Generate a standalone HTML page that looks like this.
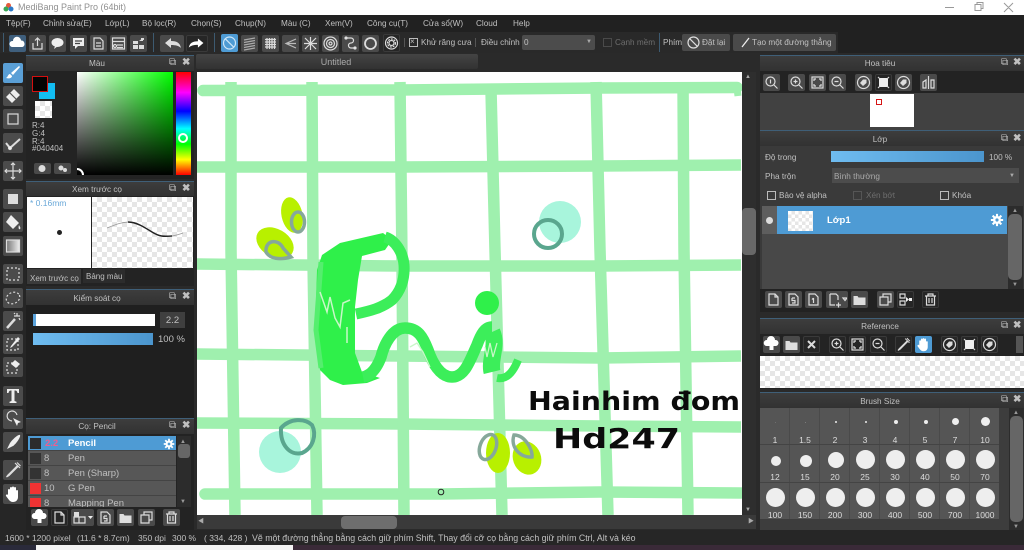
<!DOCTYPE html>
<html lang="vi"><head><meta charset="utf-8"><title>MediBang Paint Pro (64bit)</title>
<style>
html,body{margin:0;padding:0;width:1024px;height:550px;overflow:hidden;background:#2a2a2a}
body{position:relative;font-family:"Liberation Sans","Noto Sans CJK SC",sans-serif;font-size:8.2px;color:#c0c0c0}
div,span.t,svg.b{position:absolute}
.t{position:absolute;white-space:nowrap;line-height:11px;height:11px}
.c{text-align:center}
svg.b{width:17px;height:17px;background:#4a4a4a;border-radius:2px;fill:none;stroke:#dcdcdc;stroke-width:1.2}
svg.d{background:#262626;box-shadow:inset 0 0 0 1px #3a3a3a}
svg.l{width:20px;height:20px;background:#4b4b4b}
.h{background:linear-gradient(#3d3d3d,#323232);border-top:1px solid #3f5f78;box-sizing:border-box}
.ck{background:repeating-conic-gradient(#e6e6e6 0 25%,#fff 0 50%) 0 0/10px 10px}
.box{box-sizing:border-box;width:9px;height:9px;border:1px solid #bbb}
.r{height:15px;left:28px;width:148px;background:#575757;border-bottom:1px solid #444;box-sizing:border-box}
.dot{position:absolute;background:#eee;border-radius:50%}
.sz{position:absolute;width:30px;text-align:center;color:#ddd;line-height:9px;font-size:8.5px}
</style></head><body>
<svg width="0" height="0" style="position:absolute"><defs>
<symbol id="cloud" viewBox="0 0 17 17"><path d="M3 12a3 3 0 0 1 1-6 4 4 0 0 1 8-.5 3.4 3.4 0 0 1 1.500 6.500z" fill="#fff" stroke="none"/></symbol>
<symbol id="up" viewBox="0 0 17 17"><path d="M4 8v6h9V8M8.500 11V3M6 5.500 8.500 3 11 5.500"/></symbol>
<symbol id="chat" viewBox="0 0 17 17"><ellipse cx="8.500" cy="7.500" rx="6" ry="4.500" fill="#eee" stroke="none"/><path d="M6 11l-1 3 4-3" fill="#eee" stroke="none"/></symbol>
<symbol id="note" viewBox="0 0 17 17"><path d="M3 3h11v8H8l-3 3v-3H3z" fill="#eee" stroke="none"/><path d="M5 6h7M5 8.500h5" stroke="#444"/></symbol>
<symbol id="doc" viewBox="0 0 17 17"><path d="M4 3h6l3 3v8H4zM6 8h5M6 11h5"/></symbol>
<symbol id="page" viewBox="0 0 17 17"><path d="M4 3h6l3 3v8H4zM10 3v3h3"/></symbol>
<symbol id="list" viewBox="0 0 17 17"><path d="M2.500 3h12v11h-12zM2.500 6.500h12M7 10h6M7 12.500h6"/><circle cx="5" cy="11" r="1.500"/></symbol>
<symbol id="grid" viewBox="0 0 17 17"><path d="M3 6h5v3H3zM3 10h5v4H3zM9 10h5v4H9zM9 6h4V3" fill="#ddd" stroke="none"/><path d="M11 3h3v2h-3z" fill="#ddd" stroke="none"/></symbol>
<symbol id="undo" viewBox="0 0 24 17"><path d="M5 8 11 3v3c6 0 9 2 10 7-2-2-5-3-10-3v3z" fill="#ddd" stroke="none"/></symbol>
<symbol id="redo" viewBox="0 0 24 17"><path d="M19 8 13 3v3C7 6 4 8 3 13c2-2 5-3 10-3v3z" fill="#fff" stroke="none"/></symbol>
<symbol id="no" viewBox="0 0 17 17"><circle cx="8.500" cy="8.500" r="6" stroke="#cfe6f7"/><path d="M4.300 4.300l8.400 8.400" stroke="#cfe6f7"/></symbol>
<symbol id="hl" viewBox="0 0 17 17"><path d="M3 5l11-2M3 7.500l11-2M3 10l11-2M3 12.500l11-2M3 15l11-2" stroke="#aaa"/></symbol>
<symbol id="gr" viewBox="0 0 17 17"><path d="M3 4.500h11M3 7h11M3 9.500h11M3 12h11M5 3v11M7.500 3v11M10 3v11M12.500 3v11"/></symbol>
<symbol id="fan" viewBox="0 0 17 17"><path d="M14 4 4 8.500l10 4.500M14 8.500H4" stroke="#bbb"/></symbol>
<symbol id="star" viewBox="0 0 17 17"><path d="M3 3l11 11M14 3 3 14M8.500 2v13M2 8.500h13"/></symbol>
<symbol id="con" viewBox="0 0 17 17"><circle cx="8.500" cy="8.500" r="6.500"/><circle cx="8.500" cy="8.500" r="4"/><circle cx="8.500" cy="8.500" r="1.500"/></symbol>
<symbol id="cur" viewBox="0 0 17 17"><path d="M4 3h5a2 2 0 0 1 0 5 2.500 2.500 0 0 0 0 5h4"/><circle cx="4" cy="3" r="1" fill="#fff"/><circle cx="13" cy="13" r="1" fill="#fff"/></symbol>
<symbol id="ring" viewBox="0 0 17 17"><circle cx="8.500" cy="8.500" r="5.500" stroke-width="1.800"/></symbol>
<symbol id="gear" viewBox="0 0 17 17"><circle cx="8.500" cy="8.500" r="6"/><circle cx="8.500" cy="8.500" r="2.500"/><circle cx="8.500" cy="8.500" r="4" stroke-dasharray="2 1"/></symbol>
<symbol id="brush" viewBox="0 0 20 20"><path d="M16 3 8 10l2 2 7-8zM7 11c-2 0-2 3-4 4 3 1 6 0 6-2z" fill="#fff" stroke="none"/></symbol>
<symbol id="erase" viewBox="0 0 20 20"><path d="M11 3l6 6-8 8-6-6z" fill="#eee" stroke="none"/><path d="M7 7l6 6" stroke="#555"/></symbol>
<symbol id="sq" viewBox="0 0 20 20"><rect x="5" y="5" width="10" height="10"/></symbol>
<symbol id="check" viewBox="0 0 20 20"><path d="M3 10l4 5 10-9" stroke-width="2"/><circle cx="7" cy="15" r="1.500" fill="#fff"/></symbol>
<symbol id="move" viewBox="0 0 20 20"><path d="M10 2v16M2 10h16M8 4l2-2 2 2M8 16l2 2 2-2M4 8l-2 2 2 2M16 8l2 2-2 2"/></symbol>
<symbol id="fill" viewBox="0 0 20 20"><rect x="5" y="5" width="10" height="10" fill="#ddd" stroke="none"/></symbol>
<symbol id="bucket" viewBox="0 0 20 20"><path d="M8 3l8 8-6 6-7-7z" fill="#eee" stroke="none"/><path d="M16 13c1 2 2 3 1 4s-2-1-1-4z" fill="#eee" stroke="none"/></symbol>
<symbol id="grad" viewBox="0 0 20 20"><defs><linearGradient id="gg"><stop offset="0" stop-color="#777"/><stop offset="1" stop-color="#eee"/></linearGradient></defs><rect x="3.500" y="4" width="13" height="12" fill="url(#gg)" stroke="#ddd"/></symbol>
<symbol id="sel" viewBox="0 0 20 20"><rect x="4" y="4" width="12" height="12" stroke-dasharray="2 2"/></symbol>
<symbol id="lasso" viewBox="0 0 20 20"><ellipse cx="10" cy="10" rx="7" ry="5.500" stroke-dasharray="2 2" transform="rotate(-25 10 10)"/></symbol>
<symbol id="wand" viewBox="0 0 20 20"><path d="M4 17 12 8" stroke-width="2.500"/><path d="M14 2v3M11 5h6M16 7l1 2M11 2l1 1"/></symbol>
<symbol id="selp" viewBox="0 0 20 20"><rect x="4" y="5" width="11" height="11" stroke-dasharray="2 2"/><path d="M15 3 8 12l-1 2 2-1 8-8z" fill="#eee" stroke="none"/></symbol>
<symbol id="sele" viewBox="0 0 20 20"><rect x="4" y="6" width="10" height="10" stroke-dasharray="2 2"/><path d="M12 3l5 4-4 4-5-4z" fill="#eee" stroke="none"/></symbol>
<symbol id="ltr" viewBox="0 0 20 20"><path d="M4 3h12v4h-1.500c-.5-2-1-2.500-3-2.500V15l2 .8V17H6.500v-1.200l2-.8V4.500c-2 0-2.500.5-3 2.500H4z" fill="#eee" stroke="none"/></symbol>
<symbol id="op" viewBox="0 0 20 20"><path d="M9 12a5 5 0 1 1 5-6"/><path d="M10 9l8 4-3 1-1 3z" fill="#eee" stroke="none"/></symbol>
<symbol id="knife" viewBox="0 0 20 20"><path d="M17 3c1 2-4 9-7 11l-6 3 3-6c2-3 8-9 10-8z" fill="#eee" stroke="none"/></symbol>
<symbol id="drop" viewBox="0 0 20 20"><path d="M14 6 5 15l-1.500 2L6 15.500l9-9zM12 3l5 5M14 2.500l3.500 3.500"/></symbol>
<symbol id="hand" viewBox="0 0 20 20"><path d="M5 11V6a1 1 0 0 1 2 0V4a1 1 0 0 1 2 0v-.5a1 1 0 0 1 2 0V4a1 1 0 0 1 2 0v3a1 1 0 0 1 2 0v6c0 3-2 5-5 5-2 0-3-1-4-2l-3-4a1 1 0 0 1 2-1z" fill="#fff" stroke="none"/></symbol>
<symbol id="zi" viewBox="0 0 17 17"><circle cx="7.500" cy="7.500" r="4.500"/><path d="M11 11l3.500 3.500M5.500 7.500h4M7.500 5.500v4"/></symbol>
<symbol id="zo" viewBox="0 0 17 17"><circle cx="7.500" cy="7.500" r="4.500"/><path d="M11 11l3.500 3.500M5.500 7.500h4"/></symbol>
<symbol id="z1" viewBox="0 0 17 17"><circle cx="7.500" cy="7.500" r="4.500"/><path d="M11 11l3.500 3.500M7.500 5.500v4"/></symbol>
<symbol id="fit" viewBox="0 0 17 17"><rect x="3" y="3" width="11" height="11"/><path d="M5 7V5h2M12 7V5h-2M5 10v2h2M12 10v2h-2"/></symbol>
<symbol id="rl" viewBox="0 0 17 17"><circle cx="8.500" cy="8.500" r="6"/><path d="M5 9l3-3.500h3.500V9L8 12z" fill="#ddd" stroke="none"/></symbol>
<symbol id="sqi" viewBox="0 0 17 17"><rect x="4" y="4" width="9" height="9" fill="#eee" stroke="none"/><path d="M3 3l2 2M14 3l-2 2M3 14l2-2M14 14l-2-2"/></symbol>
<symbol id="flip" viewBox="0 0 17 17"><path d="M8.500 2v13M3 14V8l3-2v8zM14 14V6l-3 0v8z"/></symbol>
<symbol id="upc" viewBox="0 0 17 17"><path d="M3.500 10a3 3 0 0 1 .5-6 4 4 0 0 1 8 0 3 3 0 0 1 1 6H10.500v4h-4v-4z" fill="#fff" stroke="none"/></symbol>
<symbol id="folder" viewBox="0 0 17 17"><path d="M2.500 5h4l1 1.500h7V14h-12z" fill="#ddd" stroke="none"/></symbol>
<symbol id="copy" viewBox="0 0 17 17"><path d="M3 6h8v8H3zM6 6V3h8v8h-3"/></symbol>
<symbol id="trash" viewBox="0 0 17 17"><path d="M3 5h11M6 5V3h5v2M4.500 5v9h8V5M7 7v5M10 7v5"/></symbol>
<symbol id="merge" viewBox="0 0 17 17"><path d="M3 3h5v4H3zM3 10h5v4H3z"/><path d="M9 6l3 2.500L9 11zM12 7h3v3h-3z" fill="#eee" stroke="none"/></symbol>
<symbol id="add" viewBox="0 0 20 17"><path d="M3 3h6l2 2v4M3 3v11h5M9 14h5M11.500 11.500v5M16 7h4l-2 2.500z"/></symbol>
<symbol id="x" viewBox="0 0 17 17"><path d="M5 5l7 7M12 5l-7 7" stroke-width="2"/></symbol>
<symbol id="s5" viewBox="0 0 17 17"><path d="M4 3h6l3 3v8H4zM7 7h3M7 7v2.500h3V12H7"/></symbol>
<symbol id="s1" viewBox="0 0 17 17"><path d="M4 3h6l3 3v8H4zM8.500 7v5M7 8.500 8.500 7"/></symbol>
<symbol id="g1" viewBox="0 0 17 17"><path d="M3 3h5v5H3z" fill="#ddd" stroke="none"/><path d="M8 8h6v6H8zM3 8h5v6H3z"/></symbol>
<symbol id="cog" viewBox="0 0 16 16"><circle cx="8" cy="8" r="4.600" fill="#fff" stroke="none"/><path d="M8 1v14M1 8h14M3 3l10 10M13 3 3 13" stroke="#fff" stroke-width="2.400"/><circle cx="8" cy="8" r="1.800" fill="#4e9bd4" stroke="none"/></symbol>
</defs></svg>

<!-- title bar -->
<div style="left:0;top:0;width:1024px;height:15px;background:#fff"></div>
<svg style="position:absolute;left:3px;top:2px" width="11" height="11"><circle cx="5.500" cy="3.500" r="2.500" fill="#e5593c"/><circle cx="3" cy="7" r="2.500" fill="#3aa655"/><circle cx="8" cy="7" r="2.500" fill="#2d79c7"/></svg>
<span class="t" style="left:18px;top:2px;color:#909090;font-size:9px">MediBang Paint Pro (64bit)</span>
<svg style="position:absolute;left:940px;top:0" width="84" height="15" fill="none" stroke="#999" stroke-width="1"><path d="M5 7.500h9M35 4.500h6v6h-6zM37 4.500V2.500h6v6h-2M64 3l9 9M73 3l-9 9"/></svg>

<!-- menu -->
<div style="left:0;top:15px;width:1024px;height:17px;background:#212121"></div>
<span class="t" style="left:6px;top:18px">Tệp(F)</span>
<span class="t" style="left:43px;top:18px">Chỉnh sửa(E)</span>
<span class="t" style="left:105px;top:18px">Lớp(L)</span>
<span class="t" style="left:142px;top:18px">Bộ lọc(R)</span>
<span class="t" style="left:191px;top:18px">Chọn(S)</span>
<span class="t" style="left:235px;top:18px">Chụp(N)</span>
<span class="t" style="left:281px;top:18px">Màu (C)</span>
<span class="t" style="left:325px;top:18px">Xem(V)</span>
<span class="t" style="left:367px;top:18px">Công cụ(T)</span>
<span class="t" style="left:423px;top:18px">Cửa sổ(W)</span>
<span class="t" style="left:476px;top:18px">Cloud</span>
<span class="t" style="left:513px;top:18px">Help</span>

<!-- toolbar -->
<div style="left:0;top:32px;width:838px;height:21px;background:#292929"></div>
<div style="left:838px;top:32px;width:186px;height:21px;background:#212121"></div>
<div style="left:3px;top:33px;width:1px;height:19px;background:#3d5a70"></div>
<div style="left:153px;top:33px;width:1px;height:19px;background:#3d5a70"></div>
<div style="left:214px;top:33px;width:1px;height:19px;background:#3d5a70"></div>
<div style="left:659px;top:33px;width:1px;height:19px;background:#3d5a70"></div>
<svg class="b" style="left:9px;top:35px;background:#3f5f7d"><use href="#cloud"/></svg>
<svg class="b" style="left:29px;top:35px"><use href="#up"/></svg>
<svg class="b" style="left:49px;top:35px"><use href="#chat"/></svg>
<svg class="b" style="left:70px;top:35px"><use href="#note"/></svg>
<svg class="b" style="left:90px;top:35px"><use href="#doc"/></svg>
<svg class="b" style="left:110px;top:35px"><use href="#list"/></svg>
<svg class="b" style="left:130px;top:35px"><use href="#grid"/></svg>
<svg class="b" style="left:160px;top:35px;width:24px"><use href="#undo"/></svg>
<svg class="b d" style="left:186px;top:35px;width:22px"><use href="#redo"/></svg>
<svg class="b" style="left:221px;top:34px;background:#4e9bd4;height:18px"><use href="#no"/></svg>
<svg class="b" style="left:241px;top:35px"><use href="#hl"/></svg>
<svg class="b" style="left:262px;top:35px"><use href="#gr"/></svg>
<svg class="b" style="left:282px;top:35px"><use href="#fan"/></svg>
<svg class="b" style="left:302px;top:35px"><use href="#star"/></svg>
<svg class="b" style="left:322px;top:35px"><use href="#con"/></svg>
<svg class="b" style="left:342px;top:35px"><use href="#cur"/></svg>
<svg class="b" style="left:362px;top:35px"><use href="#ring"/></svg>
<svg class="b d" style="left:383px;top:34px;height:18px"><use href="#gear"/></svg>
<div style="left:404px;top:38px;width:1px;height:9px;background:#555"></div>
<div class="box" style="left:409px;top:38px;border-color:#bbb"></div><span class="t" style="left:410px;top:37px;font-size:8px;line-height:10px">×</span>
<span class="t" style="left:421px;top:37px">Khử răng cưa</span>
<div style="left:475px;top:38px;width:1px;height:9px;background:#555"></div>
<span class="t" style="left:481px;top:37px">Điều chỉnh</span>
<div style="left:522px;top:35px;width:73px;height:15px;background:#4c4c4c;border-radius:2px"></div>
<span class="t" style="left:524px;top:37px">0</span>
<span class="t" style="left:586px;top:37px;font-size:6px;color:#aaa">▼</span>
<div class="box" style="left:603px;top:38px;border-color:#4a4a4a"></div>
<span class="t" style="left:615px;top:37px;color:#6e6e6e">Cạnh mềm</span>
<span class="t" style="left:663px;top:37px">Phím</span>
<div style="left:682px;top:34px;width:48px;height:17px;background:#4a4a4a;border-radius:2px"></div>
<svg style="position:absolute;left:686px;top:35px" width="15" height="15" fill="none" stroke="#ddd" stroke-width="1.200"><circle cx="7.500" cy="7.500" r="5.500"/><path d="M3.700 3.700l7.600 7.600"/></svg>
<span class="t" style="left:702px;top:37px">Đặt lại</span>
<div style="left:733px;top:34px;width:103px;height:17px;background:#4a4a4a;border-radius:2px"></div>
<svg style="position:absolute;left:740px;top:36px" width="12" height="13" fill="none" stroke="#eee" stroke-width="1.300"><path d="M2 11 9 2"/></svg>
<span class="t" style="left:752px;top:37px">Tạo một đường thẳng</span>

<!-- left tools -->
<div style="left:0;top:53px;width:26px;height:477px;background:#262626"></div>
<svg class="b l" style="left:3px;top:63px;background:#5a9fd6"><use href="#brush"/></svg>
<svg class="b l" style="left:3px;top:86px"><use href="#erase"/></svg>
<svg class="b l" style="left:3px;top:109px"><use href="#sq"/></svg>
<svg class="b l" style="left:3px;top:133px"><use href="#check"/></svg>
<svg class="b l" style="left:3px;top:161px"><use href="#move"/></svg>
<svg class="b l" style="left:3px;top:189px"><use href="#fill"/></svg>
<svg class="b l" style="left:3px;top:212px"><use href="#bucket"/></svg>
<svg class="b l" style="left:3px;top:236px"><use href="#grad"/></svg>
<svg class="b l" style="left:3px;top:264px"><use href="#sel"/></svg>
<svg class="b l" style="left:3px;top:288px"><use href="#lasso"/></svg>
<svg class="b l" style="left:3px;top:311px"><use href="#wand"/></svg>
<svg class="b l" style="left:3px;top:334px"><use href="#selp"/></svg>
<svg class="b l" style="left:3px;top:357px"><use href="#sele"/></svg>
<svg class="b l" style="left:3px;top:386px"><use href="#ltr"/></svg>
<svg class="b l" style="left:3px;top:409px"><use href="#op"/></svg>
<svg class="b l" style="left:3px;top:432px"><use href="#knife"/></svg>
<svg class="b l" style="left:3px;top:460px"><use href="#drop"/></svg>
<svg class="b l" style="left:3px;top:484px"><use href="#hand"/></svg>

<!-- Colour panel -->
<div style="left:26px;top:55px;width:168px;height:124px;background:#232323"></div>
<div class="h" style="left:26px;top:55px;width:168px;height:16px"></div>
<span class="t c" style="left:26px;top:58px;width:142px">Màu</span>
<span class="t" style="left:169px;top:57px;font-size:10px">⧉</span><span class="t" style="left:182px;top:57px;font-weight:bold;font-size:10px">✖</span>
<div style="left:77px;top:72px;width:96px;height:103px;background:linear-gradient(to top,#000,rgba(0,0,0,0)),linear-gradient(to right,#fff,#0f0)"></div>
<div style="left:176px;top:72px;width:15px;height:103px;background:linear-gradient(#f00 0,#f0f 20%,#00f 38%,#0ff 55%,#0f0 70%,#ff0 85%,#f00 100%)"></div>
<div style="left:178px;top:133px;width:10px;height:10px;border:2px solid #fff;border-radius:50%;box-sizing:border-box"></div>
<svg style="position:absolute;left:77px;top:168px" width="9" height="7" fill="none" stroke="#fff" stroke-width="2"><path d="M0 1a6 6 0 0 1 6 6"/></svg>
<div style="left:39px;top:83px;width:16px;height:16px;background:#12bdf2"></div>
<div style="left:32px;top:76px;width:16px;height:16px;background:#040404;border:1.500px solid #d40f0f;box-sizing:border-box"></div>
<div class="ck" style="left:35px;top:101px;width:17px;height:17px"></div>
<span class="t" style="left:32px;top:120px;font-size:8px">R:4</span>
<span class="t" style="left:32px;top:128px;font-size:8px">G:4</span>
<span class="t" style="left:32px;top:136px;font-size:8px">R:4</span>
<span class="t" style="left:32px;top:143px;font-size:8px">#040404</span>
<svg class="b" style="left:34px;top:163px;height:11px;width:17px" viewBox="0 0 17 11"><circle cx="8" cy="5.500" r="3.500" fill="#ddd" stroke="none"/></svg>
<svg class="b" style="left:54px;top:163px;height:11px;width:17px" viewBox="0 0 17 11"><circle cx="7" cy="5" r="2.500" fill="#ddd" stroke="none"/><circle cx="11" cy="7" r="2" fill="#ddd" stroke="none"/></svg>

<!-- Preview panel -->
<div style="left:26px;top:181px;width:168px;height:105px;background:#232323"></div>
<div class="h" style="left:26px;top:181px;width:168px;height:15px"></div>
<span class="t c" style="left:26px;top:184px;width:142px">Xem trước cọ</span>
<span class="t" style="left:169px;top:183px;font-size:10px">⧉</span><span class="t" style="left:182px;top:183px;font-weight:bold;font-size:10px">✖</span>
<div style="left:27px;top:197px;width:64px;height:71px;background:#fff"></div>
<div class="ck" style="left:92px;top:197px;width:101px;height:71px"></div>
<span class="t" style="left:30px;top:198px;color:#6aa8d8;font-size:8.500px">* 0.16mm</span>
<div style="left:57px;top:230px;width:5px;height:5px;border-radius:50%;background:#222"></div>
<svg style="position:absolute;left:92px;top:197px" width="101" height="71" fill="none"><path d="M15 31C25 27 30 25 38 25S52 30 60 35 74 40 80 39 88 37 91 36" stroke="#999" stroke-width=".8"/><path d="M36 25C44 25 52 30 60 35S72 39.500 80 39" stroke="#222" stroke-width="1.400"/></svg>
<div style="left:27px;top:269px;width:54px;height:15px;background:#3b3b3b"></div>
<span class="t" style="left:30px;top:273px;font-size:8px">Xem trước cọ</span>
<div style="left:83px;top:269px;width:42px;height:14px;background:#2c2c2c"></div>
<span class="t" style="left:86px;top:271px;font-size:8px">Bảng màu</span>

<!-- Brush control -->
<div style="left:26px;top:289px;width:168px;height:129px;background:#1f1f1f"></div>
<div class="h" style="left:26px;top:289px;width:168px;height:16px"></div>
<span class="t c" style="left:26px;top:293px;width:142px">Kiểm soát cọ</span>
<span class="t" style="left:169px;top:291px;font-size:10px">⧉</span><span class="t" style="left:182px;top:291px;font-weight:bold;font-size:10px">✖</span>
<div style="left:33px;top:314px;width:122px;height:12px;background:#fff"></div>
<div style="left:33px;top:314px;width:3px;height:12px;background:#5aa3dc"></div>
<div style="left:160px;top:312px;width:25px;height:16px;background:#3f3f3f"></div>
<span class="t c" style="left:160px;top:315px;width:25px;font-size:9.500px">2.2</span>
<div style="left:33px;top:333px;width:120px;height:12px;background:linear-gradient(90deg,#6fbcf0,#4b95cd)"></div>
<span class="t" style="left:158px;top:334px;font-size:9.500px">100 %</span>

<!-- Brush list -->
<div style="left:26px;top:418px;width:168px;height:112px;background:#232323"></div>
<div class="h" style="left:26px;top:418px;width:168px;height:16px"></div>
<span class="t c" style="left:26px;top:421px;width:142px">Cọ: Pencil</span>
<span class="t" style="left:169px;top:420px;font-size:10px">⧉</span><span class="t" style="left:182px;top:420px;font-weight:bold;font-size:10px">✖</span>
<div class="r" style="top:436px;background:#4e9bd4"></div>
<div class="r" style="top:451px"></div><div class="r" style="top:466px"></div><div class="r" style="top:481px"></div>
<div class="r" style="top:496px;height:11px;border:0;overflow:hidden"></div>
<div style="left:30px;top:438px;width:11px;height:11px;background:#2c2c2c"></div>
<div style="left:30px;top:453px;width:11px;height:11px;background:#333"></div>
<div style="left:30px;top:468px;width:11px;height:11px;background:#333"></div>
<div style="left:30px;top:483px;width:11px;height:11px;background:#f03333"></div>
<div style="left:30px;top:498px;width:11px;height:9px;background:#f03333"></div>
<span class="t" style="left:45px;top:438px;color:#ee5f8f;font-weight:bold;font-size:9.500px">2.2</span>
<span class="t" style="left:68px;top:438px;color:#fff;font-weight:bold;font-size:9.500px">Pencil</span>
<svg style="position:absolute;left:163px;top:438px" width="12" height="12"><use href="#cog"/></svg>
<span class="t" style="left:44px;top:453px;font-size:9.500px">8</span><span class="t" style="left:68px;top:453px;font-size:9.500px">Pen</span>
<span class="t" style="left:44px;top:468px;font-size:9.500px">8</span><span class="t" style="left:68px;top:468px;font-size:9.500px">Pen (Sharp)</span>
<span class="t" style="left:44px;top:483px;font-size:9.500px">10</span><span class="t" style="left:68px;top:483px;font-size:9.500px">G Pen</span>
<div style="left:44px;top:497px;width:130px;height:10px;overflow:hidden"><span class="t" style="left:0;top:1px;font-size:9.500px">8</span><span class="t" style="left:24px;top:1px;font-size:9.500px">Mapping Pen</span></div>
<div style="left:177px;top:436px;width:14px;height:71px;background:#2c2c2c"></div>
<div style="left:178px;top:444px;width:12px;height:14px;background:#666;border-radius:3px"></div>
<span class="t" style="left:180px;top:437px;font-size:6px;color:#999">▲</span><span class="t" style="left:180px;top:497px;font-size:6px;color:#999">▼</span>
<svg class="b" style="left:31px;top:509px"><use href="#upc"/></svg>
<svg class="b d" style="left:51px;top:509px"><use href="#page"/></svg>
<svg class="b" style="left:71px;top:509px;width:23px" viewBox="0 0 23 17"><use href="#g1" width="17" height="17"/><path d="M17 7h5l-2.500 3z" fill="#eee" stroke="none"/></svg>
<svg class="b" style="left:97px;top:509px"><use href="#s5"/></svg>
<svg class="b" style="left:117px;top:509px"><use href="#folder"/></svg>
<svg class="b" style="left:138px;top:509px"><use href="#copy"/></svg>
<svg class="b" style="left:163px;top:509px"><use href="#trash"/></svg>

<!-- canvas -->
<div style="left:194px;top:53px;width:566px;height:477px;background:#2a2a2a"></div>
<div style="left:196px;top:54px;width:282px;height:15px;background:linear-gradient(#444,#323232);border-radius:2px"></div>
<span class="t c" style="left:196px;top:57px;width:280px;color:#aaa;font-size:9px">Untitled</span>
<div style="left:197px;top:72px;width:545px;height:443px;background:#fff"></div>
<svg style="position:absolute;left:0;top:0" width="1024" height="550" fill="none" stroke-linecap="butt">
<title>Phi</title>
<defs><clipPath id="cv"><rect x="197" y="72" width="545" height="443"/></clipPath></defs>
<g clip-path="url(#cv)">
<g stroke="#9ff0ae" stroke-width="11.500">
<path d="M203 90.500 400 90 600 88 737 87.500" stroke-linecap="round"/>
<path d="M737 88 738 96" stroke-width="7"/>
<path d="M197 167 400 167 600 166 741 165"/>
<path d="M197 264 400 266 600 266 741 265"/>
<path d="M197 354 400 356 600 358 741 356"/>
<path d="M197 423 400 424 600 426 741 427"/>
<path d="M205 494 440 494 600 492 741 493" stroke-linecap="round"/>
<path d="M231 82 231 250 235 515"/>
<path d="M312 82 313 260 317 515"/>
<path d="M400 82 402 260 404 515"/>
<path d="M491 90 495 250 502 515"/>
<path d="M596 82 600 250 608 515"/>
<path d="M683 82 684 250 688 515"/>
</g>
<circle cx="560" cy="222" r="21" fill="#a8f5dc"/>
<circle cx="548" cy="234" r="14" stroke="#5aa68e" stroke-width="4"/>
<circle cx="280" cy="452" r="21" fill="#a8f5dc"/>
<path d="M281 428C290 418 305 418 312 425 317 435 313 448 302 453 290 456 280 445 281 428Z" stroke="#5aa68e" stroke-width="4"/>
<g fill="#b8f000">
<ellipse cx="292" cy="215" rx="10.500" ry="18" transform="rotate(-12 292 215)"/>
<ellipse cx="275" cy="243" rx="20" ry="14" transform="rotate(30 275 243)"/>
<ellipse cx="498" cy="453" rx="12" ry="20"/>
<ellipse cx="527" cy="458" rx="14" ry="17" transform="rotate(-20 527 458)"/>
</g>
<g stroke="#86a89a" stroke-width="3.500">
<ellipse cx="298" cy="222" rx="6.500" ry="10"/>
<path d="M266 252C265 240 278 238 283 248L291 257C280 260 270 259 266 252Z"/>
<ellipse cx="488" cy="447" rx="8" ry="13" transform="rotate(20 488 447)"/>
<path d="M514 435C525 435 533 450 532 457 520 458 510 447 514 435Z"/>
</g>
<!-- painted lettering -->
<path d="M322 255 340 243 383 233 392 240 385 250 362 256 358 280 355 307 355 353 362 372 380 378 367 383 343 385 330 380 320 370 315 330 317 270Z" fill="#2ff04a"/>
<path d="M321 262 316 330 321 368" stroke="#55ee6e" stroke-width="5"/>
<path d="M385 237C395 240 403 252 404 265 405 280 400 292 392 300 382 308 370 311 356 314" stroke="#3cee5a" stroke-width="11" stroke-linejoin="round"/>
<path d="M363 377C373 375 378 365 381 357 384 345 392 328 405 328 418 328 423 337 428 350 432 362 440 377 452 377 465 377 470 360 477 345 481 334 485 327 492 327" stroke="#3cee5a" stroke-width="11.500" stroke-linejoin="round"/>
<path d="M492 332C498 345 489 360 492 372" stroke="#3cee5a" stroke-width="17"/>
<path d="M497 378C508 380 514 370 518 360" stroke="#3cee5a" stroke-width="8"/>
<circle cx="487" cy="303" r="12" fill="#2ff04a"/>
<path d="M320 292 327 312 330 297 335 318 340 327 343 303 350 300M347 327V343" stroke="#c9f7c8" stroke-width="1.500"/>
<path d="M410 347 417 343 423 352 430 367M485 347 487 357 490 343 493 357 497 343" stroke="#c9f7c8" stroke-width="1.300"/>
<text x="528" y="410" font-family="'DejaVu Sans',sans-serif" font-weight="bold" font-size="26" fill="#0c0c0c" textLength="212" lengthAdjust="spacingAndGlyphs">Hainhim đom</text>
<text x="553" y="448" font-family="'DejaVu Sans',sans-serif" font-weight="bold" font-size="28" fill="#0c0c0c" textLength="127" lengthAdjust="spacingAndGlyphs">Hd247</text>
<circle cx="441" cy="492" r="2.800" stroke="#222" stroke-width="1"/>
</g>
</svg>
<!-- canvas scrollbars -->
<div style="left:742px;top:72px;width:14px;height:457px;background:#2e2e2e"></div>
<div style="left:742px;top:208px;width:14px;height:47px;background:#686868;border-radius:4px"></div>
<span class="t" style="left:745px;top:72px;font-size:6px;color:#aaa">▲</span>
<span class="t" style="left:745px;top:505px;font-size:6px;color:#aaa">▼</span>
<div style="left:197px;top:515px;width:559px;height:14px;background:#3a3a3a"></div>
<div style="left:341px;top:516px;width:56px;height:13px;background:#6e6e6e;border-radius:4px"></div>
<span class="t" style="left:198px;top:517px;font-size:6px;color:#aaa">◀</span>
<span class="t" style="left:748px;top:517px;font-size:6px;color:#aaa">▶</span>

<!-- Right: navigator -->
<div style="left:760px;top:55px;width:264px;height:75px;background:#232323"></div>
<div class="h" style="left:760px;top:55px;width:264px;height:16px"></div>
<span class="t c" style="left:760px;top:58px;width:240px">Hoa tiêu</span>
<span class="t" style="left:1001px;top:57px;font-size:10px">⧉</span><span class="t" style="left:1013px;top:57px;font-weight:bold;font-size:10px">✖</span>
<svg class="b" style="left:763px;top:74px"><use href="#z1"/></svg>
<svg class="b" style="left:788px;top:74px"><use href="#zi"/></svg>
<svg class="b" style="left:809px;top:74px"><use href="#fit"/></svg>
<svg class="b" style="left:829px;top:74px"><use href="#zo"/></svg>
<svg class="b" style="left:855px;top:74px"><use href="#rl"/></svg>
<svg class="b d" style="left:875px;top:74px"><use href="#sqi"/></svg>
<svg class="b" style="left:895px;top:74px"><use href="#rl"/></svg>
<svg class="b" style="left:920px;top:74px"><use href="#flip"/></svg>
<div style="left:760px;top:93px;width:264px;height:37px;background:#414141"></div>
<div style="left:870px;top:94px;width:44px;height:33px;background:#fff"></div>
<div style="left:876px;top:99px;width:6px;height:6px;border:1.500px solid #d61515;box-sizing:border-box"></div>

<!-- Layer panel -->
<div style="left:760px;top:130px;width:264px;height:182px;background:#3a3a3a"></div>
<div class="h" style="left:760px;top:130px;width:264px;height:16px"></div>
<span class="t c" style="left:760px;top:134px;width:240px">Lớp</span>
<span class="t" style="left:1001px;top:133px;font-size:10px">⧉</span><span class="t" style="left:1013px;top:133px;font-weight:bold;font-size:10px">✖</span>
<span class="t" style="left:765px;top:152px">Độ trong</span>
<div style="left:831px;top:151px;width:153px;height:11px;background:linear-gradient(90deg,#6fbcf0,#4b95cd)"></div>
<span class="t" style="left:989px;top:152px">100 %</span>
<span class="t" style="left:765px;top:171px">Pha trộn</span>
<div style="left:832px;top:168px;width:187px;height:15px;background:#4c4c4c"></div>
<span class="t" style="left:834px;top:171px;color:#aaa">Bình thường</span>
<span class="t" style="left:1009px;top:171px;font-size:6px;color:#aaa">▼</span>
<div class="box" style="left:767px;top:191px"></div><span class="t" style="left:779px;top:190px">Bảo vệ alpha</span>
<div class="box" style="left:853px;top:191px;border-color:#555"></div><span class="t" style="left:866px;top:190px;color:#6e6e6e">Xén bớt</span>
<div class="box" style="left:940px;top:191px"></div><span class="t" style="left:952px;top:190px">Khóa</span>
<div style="left:762px;top:206px;width:246px;height:83px;background:#484848"></div>
<div style="left:762px;top:206px;width:15px;height:28px;background:#5e5e5e"></div>
<div style="left:766px;top:217px;width:7px;height:7px;border-radius:50%;background:#ddd"></div>
<div style="left:777px;top:206px;width:230px;height:28px;background:#4e9bd4"></div>
<div class="ck" style="left:788px;top:211px;width:25px;height:20px;background-size:7px 7px"></div>
<span class="t" style="left:827px;top:215px;color:#fff;font-weight:bold;font-size:9.500px">Lớp1</span>
<svg style="position:absolute;left:990px;top:213px" width="14" height="14" viewBox="0 0 16 16"><use href="#cog"/></svg>
<div style="left:1008px;top:206px;width:15px;height:83px;background:#2c2c2c"></div>
<div style="left:1008px;top:214px;width:14px;height:66px;background:#666;border-radius:5px"></div>
<span class="t" style="left:1012px;top:206px;font-size:6px;color:#999">▲</span>
<span class="t" style="left:1012px;top:280px;font-size:6px;color:#999">▼</span>
<div style="left:760px;top:289px;width:264px;height:23px;background:#222"></div>
<svg class="b" style="left:765px;top:291px"><use href="#page"/></svg>
<svg class="b" style="left:785px;top:291px"><use href="#s5"/></svg>
<svg class="b" style="left:805px;top:291px"><use href="#s1"/></svg>
<svg class="b" style="left:826px;top:291px;width:22px" viewBox="0 0 20 17"><use href="#add" width="20" height="17"/></svg>
<svg class="b" style="left:851px;top:291px"><use href="#folder"/></svg>
<svg class="b" style="left:877px;top:291px"><use href="#copy"/></svg>
<svg class="b d" style="left:897px;top:291px"><use href="#merge"/></svg>
<svg class="b d" style="left:922px;top:291px"><use href="#trash"/></svg>

<!-- Reference -->
<div style="left:760px;top:318px;width:264px;height:71px;background:#232323"></div>
<div class="h" style="left:760px;top:318px;width:264px;height:16px"></div>
<span class="t c" style="left:760px;top:321px;width:240px">Reference</span>
<span class="t" style="left:1001px;top:320px;font-size:10px">⧉</span><span class="t" style="left:1013px;top:320px;font-weight:bold;font-size:10px">✖</span>
<svg class="b" style="left:763px;top:336px"><use href="#upc"/></svg>
<svg class="b" style="left:783px;top:336px"><use href="#folder"/></svg>
<svg class="b d" style="left:803px;top:336px"><use href="#x"/></svg>
<svg class="b d" style="left:829px;top:336px"><use href="#zi"/></svg>
<svg class="b d" style="left:849px;top:336px"><use href="#fit"/></svg>
<svg class="b d" style="left:870px;top:336px"><use href="#zo"/></svg>
<svg class="b d" style="left:895px;top:336px"><use href="#drop"/></svg>
<svg class="b" style="left:915px;top:336px;background:#4e9bd4" viewBox="0 0 20 20"><use href="#hand"/></svg>
<svg class="b d" style="left:941px;top:336px"><use href="#rl"/></svg>
<svg class="b d" style="left:961px;top:336px"><use href="#sqi"/></svg>
<svg class="b d" style="left:981px;top:336px"><use href="#rl"/></svg>
<div style="left:1016px;top:336px;width:7px;height:17px;background:#555"></div>
<div class="ck" style="left:760px;top:356px;width:264px;height:32px"></div>

<!-- Brush size -->
<div style="left:760px;top:392px;width:264px;height:138px;background:#232323"></div>
<div class="h" style="left:760px;top:392px;width:264px;height:16px"></div>
<span class="t c" style="left:760px;top:396px;width:240px">Brush Size</span>
<span class="t" style="left:1001px;top:394px;font-size:10px">⧉</span><span class="t" style="left:1013px;top:394px;font-weight:bold;font-size:10px">✖</span>
<div style="left:760px;top:408px;width:249px;height:123px;background:#3d3d3d"></div>
<div style="left:760px;top:408px;width:239px;height:111px;background:repeating-linear-gradient(90deg,#555 0 29px,#4a4a4a 29px 30px)"></div>
<div style="left:760px;top:444px;width:239px;height:1px;background:#444"></div>
<div style="left:760px;top:482px;width:239px;height:1px;background:#444"></div>
<div class="dot" style="left:775px;top:422px;width:1px;height:1px;background:#777"></div>
<div class="dot" style="left:805px;top:422px;width:1px;height:1px;background:#888"></div>
<div class="dot" style="left:835px;top:421px;width:2px;height:2px"></div>
<div class="dot" style="left:865px;top:421px;width:2px;height:2px"></div>
<div class="dot" style="left:894px;top:420px;width:4px;height:4px"></div>
<div class="dot" style="left:924px;top:420px;width:4px;height:4px"></div>
<div class="dot" style="left:952px;top:418px;width:7px;height:7px"></div>
<div class="dot" style="left:981px;top:417px;width:9px;height:9px"></div>
<div class="dot" style="left:771px;top:456px;width:10px;height:10px"></div>
<div class="dot" style="left:800px;top:455px;width:12px;height:12px"></div>
<div class="dot" style="left:828px;top:452px;width:16px;height:16px"></div>
<div class="dot" style="left:856px;top:450px;width:19px;height:19px"></div>
<div class="dot" style="left:886px;top:450px;width:19px;height:19px"></div>
<div class="dot" style="left:916px;top:450px;width:19px;height:19px"></div>
<div class="dot" style="left:946px;top:450px;width:19px;height:19px"></div>
<div class="dot" style="left:976px;top:450px;width:19px;height:19px"></div>
<div class="dot" style="left:766px;top:488px;width:19px;height:19px"></div>
<div class="dot" style="left:796px;top:488px;width:19px;height:19px"></div>
<div class="dot" style="left:826px;top:488px;width:19px;height:19px"></div>
<div class="dot" style="left:856px;top:488px;width:19px;height:19px"></div>
<div class="dot" style="left:886px;top:488px;width:19px;height:19px"></div>
<div class="dot" style="left:916px;top:488px;width:19px;height:19px"></div>
<div class="dot" style="left:946px;top:488px;width:19px;height:19px"></div>
<div class="dot" style="left:976px;top:488px;width:19px;height:19px"></div>
<span class="sz" style="left:760px;top:436px">1</span><span class="sz" style="left:790px;top:436px">1.5</span><span class="sz" style="left:820px;top:436px">2</span><span class="sz" style="left:850px;top:436px">3</span><span class="sz" style="left:880px;top:436px">4</span><span class="sz" style="left:910px;top:436px">5</span><span class="sz" style="left:940px;top:436px">7</span><span class="sz" style="left:970px;top:436px">10</span>
<span class="sz" style="left:760px;top:473px">12</span><span class="sz" style="left:790px;top:473px">15</span><span class="sz" style="left:820px;top:473px">20</span><span class="sz" style="left:850px;top:473px">25</span><span class="sz" style="left:880px;top:473px">30</span><span class="sz" style="left:910px;top:473px">40</span><span class="sz" style="left:940px;top:473px">50</span><span class="sz" style="left:970px;top:473px">70</span>
<span class="sz" style="left:760px;top:511px">100</span><span class="sz" style="left:790px;top:511px">150</span><span class="sz" style="left:820px;top:511px">200</span><span class="sz" style="left:850px;top:511px">300</span><span class="sz" style="left:880px;top:511px">400</span><span class="sz" style="left:910px;top:511px">500</span><span class="sz" style="left:940px;top:511px">700</span><span class="sz" style="left:970px;top:511px">1000</span>
<div style="left:1009px;top:408px;width:15px;height:122px;background:#2c2c2c"></div>
<div style="left:1010px;top:416px;width:13px;height:106px;background:#666;border-radius:5px"></div>
<span class="t" style="left:1013px;top:408px;font-size:6px;color:#999">▲</span>
<span class="t" style="left:1013px;top:522px;font-size:6px;color:#999">▼</span>

<!-- status -->
<div style="left:0;top:530px;width:1024px;height:15px;background:#262626"></div>
<span class="t" style="left:5px;top:533px;font-size:8.500px">1600 * 1200 pixel</span>
<span class="t" style="left:77px;top:533px;font-size:8.500px">(11.6 * 8.7cm)</span>
<span class="t" style="left:138px;top:533px;font-size:8.500px">350 dpi</span>
<span class="t" style="left:172px;top:533px;font-size:8.500px">300 %</span>
<span class="t" style="left:204px;top:533px;font-size:8.500px">( 334, 428 )</span>
<span class="t" style="left:252px;top:533px;font-size:8.800px">Vẽ một đường thẳng bằng cách giữ phím Shift, Thay đổi cỡ cọ bằng cách giữ phím Ctrl, Alt và kéo</span>
<div style="left:0;top:545px;width:36px;height:5px;background:#2a2a3a"></div>
<div style="left:36px;top:545px;width:257px;height:5px;background:#f4f4f4"></div>
<div style="left:293px;top:545px;width:731px;height:5px;background:#3a2a38"></div>
</body></html>
